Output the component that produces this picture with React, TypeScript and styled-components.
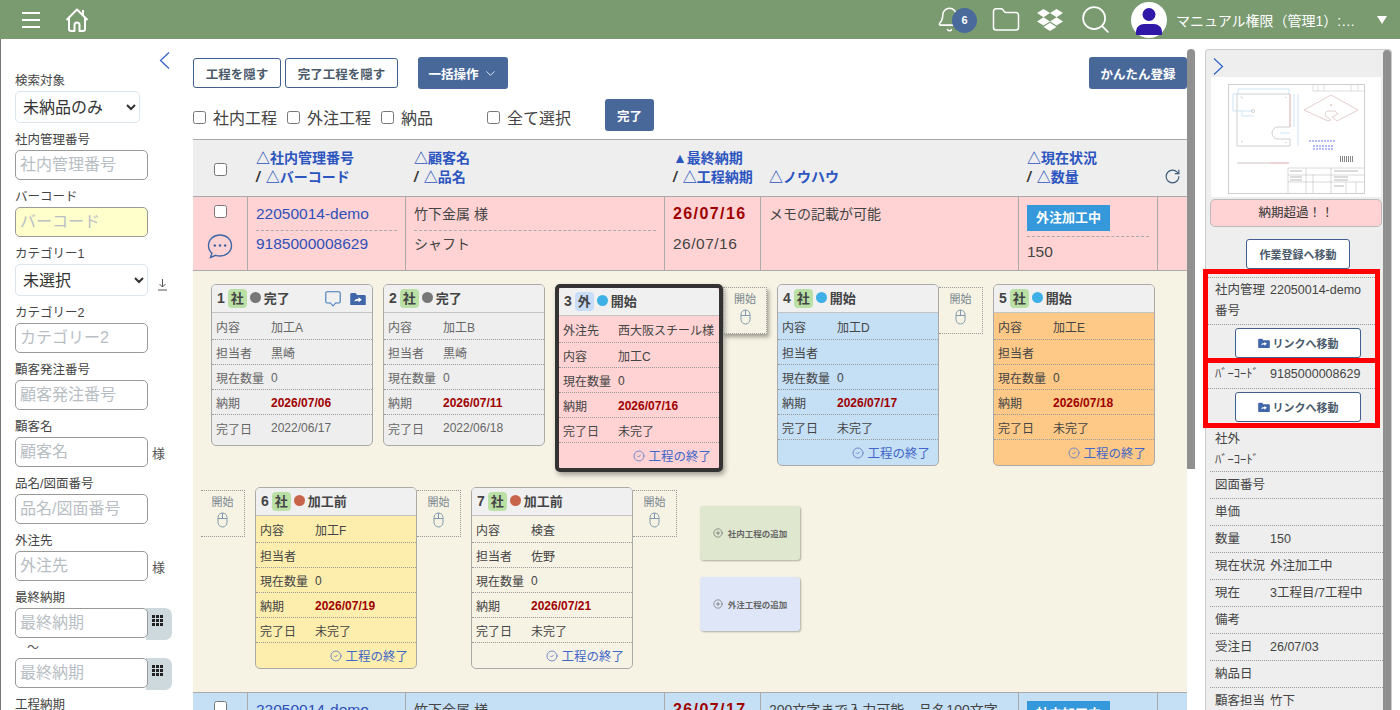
import React from 'react';
import styled, { createGlobalStyle } from 'styled-components';
import { Bell, ChevronDown, CircleCheck, CirclePlus, Folder, RotateCw, Search } from 'lucide-react';
import { FaDropbox } from 'react-icons/fa';

const GlobalStyle = createGlobalStyle`
  html, body { margin: 0; padding: 0; height: 100%; overflow: hidden; background: #fff; }
  body, input, select, button { font-family: "Liberation Sans", "Noto Sans CJK JP", sans-serif; }
  * { box-sizing: border-box; }
`;

type Step = {
  no: number;
  kind: '社' | '外';
  dot: string;
  status: string;
  bg: string;
  rows: [string, string][];
  due: string;
  done: string;
  finish?: boolean;
  selected?: boolean;
  startBefore?: boolean;
  startAfter?: boolean;
  tools?: boolean;
};

const steps: Step[] = [
  { no: 1, kind: '社', dot: '#777', status: '完了', bg: '#eee', rows: [['内容', '加工A'], ['担当者', '黒崎'], ['現在数量', '0']], due: '2026/07/06', done: '2022/06/17', tools: true },
  { no: 2, kind: '社', dot: '#777', status: '完了', bg: '#eee', rows: [['内容', '加工B'], ['担当者', '黒崎'], ['現在数量', '0']], due: '2026/07/11', done: '2022/06/18' },
  { no: 3, kind: '外', dot: '#3fb0e6', status: '開始', bg: '#ffd3d3', rows: [['外注先', '西大阪スチール様'], ['内容', '加工C'], ['現在数量', '0']], due: '2026/07/16', done: '未完了', finish: true, selected: true, startAfter: true },
  { no: 4, kind: '社', dot: '#3fb0e6', status: '開始', bg: '#c5dff5', rows: [['内容', '加工D'], ['担当者', ''], ['現在数量', '0']], due: '2026/07/17', done: '未完了', finish: true, startAfter: true },
  { no: 5, kind: '社', dot: '#3fb0e6', status: '開始', bg: '#fec986', rows: [['内容', '加工E'], ['担当者', ''], ['現在数量', '0']], due: '2026/07/18', done: '未完了', finish: true },
  { no: 6, kind: '社', dot: '#c8634c', status: '加工前', bg: '#fdeeae', rows: [['内容', '加工F'], ['担当者', ''], ['現在数量', '0']], due: '2026/07/19', done: '未完了', finish: true, startBefore: true, startAfter: true },
  { no: 7, kind: '社', dot: '#c8634c', status: '加工前', bg: '#f7f3e4', rows: [['内容', '検査'], ['担当者', '佐野'], ['現在数量', '0']], due: '2026/07/21', done: '未完了', finish: true, startAfter: true },
];

const fields = [
  { label: '社内管理番号' },
  { label: 'バーコード', yellow: true },
  { label: 'カテゴリー1', select: '未選択', sort: true },
  { label: 'カテゴリー2' },
  { label: '顧客発注番号' },
  { label: '顧客名', suffix: '様' },
  { label: '品名/図面番号' },
  { label: '外注先', suffix: '様' },
];

const panelRows: [string, string][] = [
  ['図面番号', ''],
  ['単価', ''],
  ['数量', '150'],
  ['現在状況', '外注加工中'],
  ['現在', '3工程目/7工程中'],
  ['備考', ''],
  ['受注日', '26/07/03'],
  ['納品日', ''],
  ['顧客担当', '竹下'],
];

function HomeIcon() {
  return (
    <svg width="24" height="26" viewBox="0 0 24 26" fill="none" stroke="#fff" strokeWidth="2" strokeLinejoin="round">
      <path d="M1.5 13 12 2.5 22.5 13" />
      <path d="M18 3v5" />
      <path d="M4 11v11a2 2 0 0 0 2 2h3.5v-6a2.5 2.5 0 0 1 5 0v6H18a2 2 0 0 0 2-2V11" />
    </svg>
  );
}

function AvatarIcon() {
  return (
    <svg width="36" height="36" viewBox="0 0 36 36">
      <circle cx="18" cy="18" r="18" fill="#fff" />
      <circle cx="18" cy="12.5" r="6.5" fill="#2f17a8" />
      <path d="M5 33v-3c0-5 4-8 8-8h10c4 0 8 3 8 8v3z" fill="#2f17a8" />
    </svg>
  );
}

function ChatIcon() {
  return (
    <svg width="26" height="26" viewBox="0 0 26 26" fill="none" stroke="#3f66a8" strokeWidth="1.4">
      <path d="M13 2c6.4 0 11.5 4.5 11.5 10.5S19.4 23 13 23c-1.6 0-3-.2-4.3-.7L3.5 24.500l1.400-4.300C2.800 18.300 1.500 15.600 1.500 12.500 1.500 6.500 6.600 2 13 2z" />
      <circle cx="7.8" cy="12.5" r="1.3" fill="#3f66a8" stroke="none" />
      <circle cx="13" cy="12.5" r="1.3" fill="#3f66a8" stroke="none" />
      <circle cx="18.2" cy="12.5" r="1.3" fill="#3f66a8" stroke="none" />
    </svg>
  );
}

function BubbleIcon() {
  return (
    <svg width="16" height="16" viewBox="0 0 16 16" fill="none" stroke="#3f7ab8" strokeWidth="1.1" strokeLinejoin="round">
      <path d="M2 .8h12a1.200 1.200 0 0 1 1.200 1.200v8.800a1.200 1.200 0 0 1-1.200 1.200h-3.500L8 15l-2.500-3H2A1.200 1.200 0 0 1 .8 10.800V2A1.200 1.200 0 0 1 2 .8z" />
    </svg>
  );
}

function MouseIcon() {
  return (
    <svg width="11" height="16" viewBox="0 0 11 16" fill="none" stroke="#7f9ab0" strokeWidth="1">
      <rect x="1" y="1" width="9" height="14" rx="4.5" />
      <path d="M1 6.5h9M5.5 1v5.5" />
    </svg>
  );
}

function CalendarGrid() {
  return (
    <svg width="12" height="12" viewBox="0 0 12 12" fill="#222">
      {[0, 4, 8].flatMap((y) => [0, 4, 8].map((x) => <rect key={`${x}-${y}`} x={x} y={y} width="3" height="3" />))}
    </svg>
  );
}

function FolderLinkIcon({ size = 16 }: { size?: number }) {
  return (
    <svg width={size} height={size * 0.85} viewBox="0 0 16 14" fill="#3f66a8">
      <path d="M0 2.500A1.500 1.500 0 0 1 1.500 1h4l1.500 2h7.500A1.500 1.500 0 0 1 16 4.500v8a1.500 1.500 0 0 1-1.500 1.500h-13A1.500 1.500 0 0 1 0 12.500z" />
      <path d="M4 10c.5-2 2-3 4.500-3V5.500L12 8 8.500 10.500V9C6.500 9 5 9.200 4 10z" fill="#fff" />
    </svg>
  );
}

function SlimChevron({ left }: { left?: boolean }) {
  return (
    <svg width="11" height="17" viewBox="0 0 11 17" fill="none" stroke="#2f62c8" strokeWidth="1.2">
      <path d={left ? 'M10 .5 1.500 8.500l8.500 8' : 'M1 .5l8.500 8-8.500 8'} />
    </svg>
  );
}

function SortArrowIcon() {
  return (
    <svg width="11" height="12" viewBox="0 0 11 12" fill="none" stroke="#555" strokeWidth="1">
      <path d="M5.500 0v8M2.500 5l3 3 3-3M1 11h9" />
    </svg>
  );
}

function DrawingThumb() {
  return (
    <svg width="137" height="110" viewBox="0 0 137 110" fill="none">
      <rect x="0.5" y="0.5" width="136" height="109" stroke="#cfcfcf" />
      <path d="M85 1v6h51M90 1v6M96 1v6M123 1v6M130 1v6" stroke="#c8c8c8" strokeWidth="0.6" />
      <path d="M9 10h53v33H50a6 6 0 0 0 0 12h12v7H9z" stroke="#c4c4c4" strokeWidth="0.8" />
      <path d="M62 10v33" stroke="#f0b8b8" strokeWidth="0.8" />
      <path d="M10 5h51M10 5v5M61 5v5M5 10v17M5 10h4M5 27h20M14 27v5h12M66 10v33M70 10v52M52 49h10" stroke="#bcd8f4" strokeWidth="0.7" />
      <circle cx="25" cy="27" r="1.6" stroke="#bbb" strokeWidth="0.6" />
      <path d="M13 12.500l1.500 2M13 57l1.500 1M57 13l1 1M57 58l1 1" stroke="#aaa" strokeWidth="0.7" />
      <path d="M76 26 103 11l27 15-21 11-5-4 6-3-3-3h-7a3 3 0 0 0-2 5l5 4-3 1z" stroke="#d9b9b9" strokeWidth="0.7" />
      <circle cx="103" cy="21" r="0.8" fill="#c99" />
      <path d="M81 57h27M85 62h20M85 65h20" stroke="#6a78f0" strokeWidth="1.2" strokeDasharray="2 1" />
      <path d="M112 75h14" stroke="#888" strokeWidth="6" strokeDasharray="1 1" />
      <path d="M9 79h33" stroke="#d0c4c4" strokeWidth="1.1" />
      <path d="M42 79h19" stroke="#e8b0b0" strokeWidth="1.1" />
      <path d="M60 84h76M60 84v25M78 84v25M85 90v19M60 91h76M60 98h76M103 84v25M118 98v11M128 98v11" stroke="#b0b0b0" strokeWidth="0.5" />
      <path d="M62 87h12M62 93h12M62 96h12M106 87h24M106 93h14M106 96h14M106 102h10" stroke="#999" strokeWidth="0.7" />
    </svg>
  );
}

function StepCard({ step }: { step: Step }) {
  const rows: [string, string, boolean][] = [
    ...step.rows.map(([k, v]) => [k, v, false] as [string, string, boolean]),
    ['納期', step.due, true],
    ['完了日', step.done, false],
  ];
  return (
    <Card $bg={step.bg} $selected={step.selected} $plain={step.bg === '#eee'}>
      <CardHead>
        <StepNo>{step.no}</StepNo>
        <KindBadge $kind={step.kind}>{step.kind}</KindBadge>
        <StatusDot $color={step.dot} />
        <StatusText>{step.status}</StatusText>
        {step.tools && (
          <CardTools>
            <BubbleIcon />
            <FolderLinkIcon />
          </CardTools>
        )}
      </CardHead>
      {rows.map(([k, v, isDue], i) => (
        <CardRow key={k} $first={i === 0} $last={i === rows.length - 1 && !step.finish}>
          <CardKey>{k}</CardKey>
          <CardValue $due={isDue}>{v}</CardValue>
        </CardRow>
      ))}
      {step.finish && (
        <FinishLink>
          <CircleCheck size={12} strokeWidth={1.8} />
          工程の終了
        </FinishLink>
      )}
    </Card>
  );
}

export default function App() {
  return (
    <Page>
      <GlobalStyle />
      <Header>
        <HeaderLeft>
          <Burger><span /><span /><span /></Burger>
          <HomeIcon />
        </HeaderLeft>
        <HeaderRight>
          <BellWrap>
            <Bell size={27} color="#fff" strokeWidth={1.4} />
            <BellBadge>6</BellBadge>
          </BellWrap>
          <Folder size={30} color="#fff" strokeWidth={1.2} />
          <FaDropbox size={26} color="#fff" />
          <Search size={33} color="#fff" strokeWidth={1.2} />
          <UserBox>
            <AvatarIcon />
            <UserName>マニュアル権限（管理1）:…</UserName>
            <Caret />
          </UserBox>
        </HeaderRight>
      </Header>

      <Body>
        <Sidebar>
          <SideCollapse><SlimChevron left /></SideCollapse>
          <FieldLabel>検索対象</FieldLabel>
          <FieldRow>
            <SelectBox defaultValue="未納品のみ" $width={125}>
              <option>未納品のみ</option>
            </SelectBox>
          </FieldRow>
          {fields.map((f) => (
            <React.Fragment key={f.label}>
              <FieldLabel>{f.label}</FieldLabel>
              <FieldRow>
                {f.select ? (
                  <SelectBox defaultValue={f.select} $width={133}>
                    <option>{f.select}</option>
                  </SelectBox>
                ) : (
                  <TextInput placeholder={f.label} $yellow={f.yellow} />
                )}
                {f.suffix && <Suffix>{f.suffix}</Suffix>}
                {f.sort && <SortMark><SortArrowIcon /></SortMark>}
              </FieldRow>
            </React.Fragment>
          ))}
          <FieldLabel>最終納期</FieldLabel>
          <DateRow>
            <TextInput placeholder="最終納期" />
            <DateAddon><CalendarGrid /></DateAddon>
          </DateRow>
          <Tilde>～</Tilde>
          <DateRow>
            <TextInput placeholder="最終納期" />
            <DateAddon><CalendarGrid /></DateAddon>
          </DateRow>
          <FieldLabel>工程納期</FieldLabel>
        </Sidebar>

        <Main>
          <Toolbar>
            <ToolGroup>
              <OutlineButton $width={88}>工程を隠す</OutlineButton>
              <OutlineButton $width={113}>完了工程を隠す</OutlineButton>
              <BulkButton>一括操作<ChevronDown size={15} strokeWidth={1.3} /></BulkButton>
            </ToolGroup>
            <FillButton>かんたん登録</FillButton>
          </Toolbar>
          <FilterRow>
            <Check><input type="checkbox" />社内工程</Check>
            <Check><input type="checkbox" />外注工程</Check>
            <Check><input type="checkbox" />納品</Check>
            <Check $gap={44}><input type="checkbox" />全て選択</Check>
            <DoneButton>完了</DoneButton>
          </FilterRow>

          <TableHead>
            <HeadCheck><input type="checkbox" /></HeadCheck>
            <HeadCell>
              <SortLink>△社内管理番号</SortLink>
              <span><Slash>/</Slash> <SortLink>△バーコード</SortLink></span>
            </HeadCell>
            <HeadCell>
              <SortLink>△顧客名</SortLink>
              <span><Slash>/</Slash> <SortLink>△品名</SortLink></span>
            </HeadCell>
            <HeadCell>
              <SortLink>▲最終納期</SortLink>
              <span><Slash>/</Slash> <SortLink>△工程納期</SortLink></span>
            </HeadCell>
            <HeadCell>
              <span>&nbsp;</span>
              <SortLink>△ノウハウ</SortLink>
            </HeadCell>
            <HeadCell>
              <SortLink>△現在状況</SortLink>
              <span><Slash>/</Slash> <SortLink>△数量</SortLink></span>
            </HeadCell>
            <HeadRefresh><RotateCw size={17} color="#3a5a78" strokeWidth={1.6} /></HeadRefresh>
          </TableHead>

          <OrderRow $bg="#ffd3d3">
            <CheckCell>
              <input type="checkbox" />
              <ChatIcon />
            </CheckCell>
            <OrderCell>
              <OrderLine $link $dash $latin>22050014-demo</OrderLine>
              <OrderLine $link $latin>9185000008629</OrderLine>
            </OrderCell>
            <OrderCell>
              <OrderLine $dash>竹下金属 様</OrderLine>
              <OrderLine>シャフト</OrderLine>
            </OrderCell>
            <OrderCell>
              <DueLine>26/07/16</DueLine>
              <OrderLine $latin $spaced>26/07/16</OrderLine>
            </OrderCell>
            <OrderCell>
              <MemoLine>メモの記載が可能</MemoLine>
            </OrderCell>
            <OrderCell>
              <StateWrap><StateTag>外注加工中</StateTag></StateWrap>
              <QtyLine $latin>150</QtyLine>
            </OrderCell>
            <OrderCell />
          </OrderRow>

          <FlowArea>
            {steps.map((step) => (
              <React.Fragment key={step.no}>
                {step.startBefore && <StartBox><span>開始</span><MouseIcon /></StartBox>}
                <StepCard step={step} />
                {step.startAfter && (
                  <StartBox $raised={step.selected}><span>開始</span><MouseIcon /></StartBox>
                )}
              </React.Fragment>
            ))}
            <AddColumn>
              <AddButton $bg="#dfe8cf"><CirclePlus size={10} strokeWidth={1.6} />社内工程の追加</AddButton>
              <AddButton $bg="#dfe6f7"><CirclePlus size={10} strokeWidth={1.6} />外注工程の追加</AddButton>
            </AddColumn>
          </FlowArea>

          <OrderRow $bg="#c5dff5">
            <CheckCell><input type="checkbox" /></CheckCell>
            <OrderCell><OrderLine $link $dash $latin>22050014-demo</OrderLine></OrderCell>
            <OrderCell><OrderLine $dash>竹下金属 様</OrderLine></OrderCell>
            <OrderCell><DueLine>26/07/17</DueLine></OrderCell>
            <OrderCell><MemoLine>200文字まで入力可能。品名100文字</MemoLine></OrderCell>
            <OrderCell><StateWrap><StateTag>社内加工中</StateTag></StateWrap></OrderCell>
            <OrderCell />
          </OrderRow>
        </Main>

        <MainScroll><ScrollThumb $height={420} /></MainScroll>

        <Panel>
          <PanelInner>
            <PanelToggle><SlimChevron /></PanelToggle>
            <ThumbBox><DrawingThumb /></ThumbBox>
            <OverdueBox>納期超過！！</OverdueBox>
            <WorkButton>作業登録へ移動</WorkButton>
            <MarkedBox>
              <PanelRow $top>
                <PanelKey>社内管理番号</PanelKey>
                <PanelValue>22050014-demo</PanelValue>
              </PanelRow>
              <LinkButton><FolderLinkIcon size={12} />リンクへ移動</LinkButton>
            </MarkedBox>
            <MarkedBox $second>
              <PanelRow>
                <PanelKey>ﾊﾞｰｺｰﾄﾞ</PanelKey>
                <PanelValue>9185000008629</PanelValue>
              </PanelRow>
              <LinkButton><FolderLinkIcon size={12} />リンクへ移動</LinkButton>
            </MarkedBox>
            <TightRow>
              <PanelKey>社外<br />ﾊﾞｰｺｰﾄﾞ</PanelKey>
            </TightRow>
            {panelRows.map(([k, v]) => (
              <PanelRow key={k}>
                <PanelKey>{k}</PanelKey>
                <PanelValue>{v}</PanelValue>
              </PanelRow>
            ))}
          </PanelInner>
          <ScrollThumb $height={661} />
        </Panel>
      </Body>
    </Page>
  );
}

const Page = styled.div`
  width: 1400px;
  height: 710px;
  display: flex;
  flex-direction: column;
  overflow: hidden;
  color: #333;
`;

const Header = styled.header`
  height: 39px;
  flex-shrink: 0;
  background: #7a9a70;
  display: flex;
  align-items: center;
  justify-content: space-between;
  padding: 0 0 0 22px;
`;

const HeaderLeft = styled.div`
  display: flex;
  align-items: center;
  gap: 25px;
`;

const Burger = styled.div`
  width: 18px;
  display: flex;
  flex-direction: column;
  gap: 5px;

  & > span {
    height: 2px;
    background: #fff;
  }
`;

const HeaderRight = styled.div`
  display: flex;
  align-items: center;
  gap: 16px;
`;

const BellWrap = styled.div`
  position: relative;
  width: 39px;
  height: 30px;
  display: flex;
  align-items: center;
`;

const BellBadge = styled.span`
  position: absolute;
  left: 16px;
  top: 3px;
  width: 25px;
  height: 25px;
  border-radius: 50%;
  background: #4a6a9c;
  color: #fff;
  font-size: 11px;
  font-weight: 700;
  display: flex;
  align-items: center;
  justify-content: center;
`;

const UserBox = styled.div`
  display: flex;
  align-items: center;
  gap: 9px;
  padding-right: 13px;
  margin-left: 3px;
`;

const UserName = styled.span`
  width: 192px;
  color: #fff;
  font-size: 14px;
  white-space: nowrap;
  overflow: hidden;
`;

const Caret = styled.span`
  width: 0;
  height: 0;
  border-left: 5.5px solid transparent;
  border-right: 5.5px solid transparent;
  border-top: 8px solid #fff;
`;

const Body = styled.div`
  flex: 1;
  min-height: 0;
  display: flex;
  border-left: 1px solid #777;
`;

const Sidebar = styled.aside`
  position: relative;
  width: 192px;
  flex-shrink: 0;
  padding: 30px 0 0 14px;
  overflow: hidden;
`;

const SideCollapse = styled.div`
  position: absolute;
  top: 13px;
  left: 158px;
`;

const FieldLabel = styled.div`
  height: 22px;
  padding-top: 3px;
  font-size: 12.5px;
  line-height: 18px;
  color: #444;
`;

const FieldRow = styled.div`
  display: flex;
  align-items: center;
  margin-bottom: 5px;
`;

const TextInput = styled.input<{ $yellow?: boolean }>`
  position: relative;
  width: 133px;
  height: 30px;
  padding: 0 4px;
  font-size: 16px;
  border: 1px solid #999;
  border-radius: 5px;
  background: ${(p) => (p.$yellow ? '#ffffcc' : '#fff')};

  &::placeholder {
    color: #b8bec4;
  }
`;

const SelectBox = styled.select<{ $width: number }>`
  width: ${(p) => p.$width}px;
  height: 32px;
  padding: 0 3px;
  font-size: 16px;
  color: #333;
  background: #fff;
  border: 1px solid #dce4ec;
  border-radius: 5px;
`;

const Suffix = styled.span`
  margin-left: 4px;
  font-size: 13px;
  color: #555;
`;

const SortMark = styled.span`
  display: flex;
  margin: 10px 0 0 9px;
`;

const DateRow = styled.div`
  display: flex;
  align-items: flex-start;
  margin-bottom: 3px;
`;

const DateAddon = styled.div`
  width: 26px;
  height: 32px;
  margin-left: -2px;
  padding: 5px 0 0 6px;
  background: #cdd9dc;
  border-radius: 0 7px 7px 0;
`;

const Tilde = styled.div`
  height: 15px;
  padding-left: 12px;
  font-size: 12px;
  line-height: 10px;
  color: #555;
`;

const Main = styled.main`
  width: 994px;
  flex-shrink: 0;
  padding-top: 18px;
`;

const Toolbar = styled.div`
  display: flex;
  justify-content: space-between;
  align-items: flex-start;
`;

const ToolGroup = styled.div`
  display: flex;
  align-items: center;
  gap: 4px;
`;

const OutlineButton = styled.button<{ $width?: number }>`
  width: ${(p) => (p.$width ? `${p.$width}px` : 'auto')};
  height: 30px;
  padding: 0;
  background: #fff;
  border: 1px solid #3f5f8f;
  border-radius: 3px;
  font-size: 12.5px;
  font-weight: 700;
  color: #4a5a6a;
`;

const FillButton = styled.button`
  width: 98px;
  height: 32px;
  padding: 0;
  border: 0;
  border-radius: 3px;
  background: #48689a;
  color: #fff;
  font-size: 12.5px;
  font-weight: 700;
`;

const BulkButton = styled(FillButton)`
  width: 90px;
  margin-left: 16px;
  display: flex;
  align-items: center;
  justify-content: center;
  gap: 4px;
`;

const FilterRow = styled.div`
  height: 50px;
  padding-top: 10px;
  display: flex;
  align-items: flex-start;
`;

const Check = styled.label<{ $gap?: number }>`
  height: 32px;
  display: flex;
  align-items: center;
  margin-top: 2px;
  margin-left: ${(p) => p.$gap ?? 0}px;
  margin-right: 10px;
  font-size: 16px;
  color: #444;

  & > input {
    width: 13px;
    height: 13px;
    margin: 0 7px 0 0;
  }
`;

const DoneButton = styled(FillButton)`
  margin-left: 24px;
  width: 49px;
`;

const sevenCols = `54px 158px 259px 96px 258px 139px 30px`;

const TableHead = styled.div`
  height: 58px;
  display: grid;
  grid-template-columns: ${sevenCols};
  background: #eee;
  border-top: 1px solid #aaa;
  border-bottom: 1px solid #aaa;
`;

const HeadCheck = styled.div`
  display: flex;
  align-items: center;
  justify-content: center;
  padding-top: 3px;

  & > input {
    width: 13px;
    height: 13px;
    margin: 0;
  }
`;

const HeadCell = styled.div`
  padding: 9px 0 0 9px;
  display: flex;
  flex-direction: column;
  font-size: 14px;
  line-height: 19px;
`;

const SortLink = styled.span`
  color: #2c55c0;
  font-weight: 700;
`;

const Slash = styled.span`
  margin-right: 2px;
  color: #333;
  font-style: italic;
  font-weight: 700;
`;

const HeadRefresh = styled.div`
  display: flex;
  align-items: flex-end;
  justify-content: center;
  padding-bottom: 11px;
`;

const OrderRow = styled.div<{ $bg: string }>`
  height: 74px;
  display: grid;
  grid-template-columns: ${sevenCols};
  background: ${(p) => p.$bg};
  border-bottom: 1px solid #aaa;
`;

const CheckCell = styled.div`
  display: flex;
  flex-direction: column;
  align-items: center;
  gap: 15px;
  padding-top: 8px;

  & > input {
    width: 13px;
    height: 13px;
    margin: 0;
  }
`;

const OrderCell = styled.div`
  border-left: 1px solid #aaa;
  padding: 0 8px;
`;

const OrderLine = styled.div<{ $link?: boolean; $dash?: boolean; $latin?: boolean; $spaced?: boolean }>`
  height: ${(p) => (p.$dash ? 34 : 30)}px;
  padding-top: ${(p) => (p.$dash ? 7 : 3)}px;
  font-size: ${(p) => (p.$latin ? 15.5 : 14)}px;
  letter-spacing: ${(p) => (p.$spaced ? 0.5 : 0)}px;
  line-height: 20px;
  color: ${(p) => (p.$link ? '#2f50b8' : '#444')};
  border-bottom: ${(p) => (p.$dash ? '1px dashed #aaa' : '0')};
  white-space: nowrap;
`;

const MemoLine = styled(OrderLine)`
  padding-top: 7px;
`;

const QtyLine = styled(OrderLine)`
  padding-top: 5px;
`;

const DueLine = styled.div`
  height: 34px;
  padding-top: 7px;
  font-size: 16px;
  font-weight: 700;
  letter-spacing: 1.4px;
  line-height: 20px;
  color: #a00000;
`;

const StateWrap = styled.div`
  height: 40px;
  padding-top: 8px;
  border-bottom: 1px dashed #aaa;
`;

const StateTag = styled.span`
  display: inline-block;
  height: 26px;
  padding: 0 9px;
  background: #3498db;
  color: #fff;
  font-size: 13px;
  font-weight: 700;
  line-height: 26px;
`;

const FlowArea = styled.div`
  height: 422px;
  padding: 13px 8px 0;
  background: #f7f3e4;
  border-bottom: 1px solid #aaa;
  display: flex;
  flex-wrap: wrap;
  align-items: flex-start;
  align-content: flex-start;
  row-gap: 15px;
`;

const Card = styled.div<{ $bg: string; $selected?: boolean; $plain?: boolean }>`
  width: ${(p) => (p.$selected ? 168 : 162)}px;
  margin-left: 10px;
  flex-shrink: 0;
  background: ${(p) => p.$bg};
  border: ${(p) => (p.$selected ? '4px solid #333' : '1px solid #aaa')};
  border-radius: 5px;
  box-shadow: ${(p) => (p.$selected ? '2px 3px 5px rgba(0, 0, 0, 0.35)' : 'none')};
  padding-bottom: ${(p) => (p.$plain ? 5 : 0)}px;
  color: ${(p) => (p.$plain ? '#666' : '#444')};
`;

const CardHead = styled.div`
  height: 28px;
  padding-left: 5px;
  display: flex;
  align-items: center;
  background: #f0f0f0;
  border-bottom: 1px solid #c4c4c4;
  border-radius: 4px 4px 0 0;
`;

const StepNo = styled.span`
  padding-bottom: 2px;
  font-size: 14px;
  font-weight: 700;
  color: #444;
`;

const KindBadge = styled.span<{ $kind: string }>`
  width: 19px;
  height: 19px;
  margin: 0 3px;
  border-radius: 4px;
  background: ${(p) => (p.$kind === '社' ? '#bbe0a5' : '#c9dcfa')};
  font-size: 13px;
  font-weight: 700;
  line-height: 19px;
  text-align: center;
  color: #444;
`;

const StatusDot = styled.span<{ $color: string }>`
  width: 11px;
  height: 11px;
  margin: 0 3px 2px 0;
  border-radius: 50%;
  background: ${(p) => p.$color};
`;

const StatusText = styled.span`
  padding-bottom: 2px;
  font-size: 13px;
  font-weight: 700;
  color: #444;
`;

const CardTools = styled.span`
  margin-left: auto;
  padding-right: 6px;
  display: flex;
  align-items: center;
  gap: 9px;
`;

const CardRow = styled.div<{ $first?: boolean; $last?: boolean }>`
  height: ${(p) => (p.$first ? 27 : 25)}px;
  padding: 1px 0 0 4px;
  display: flex;
  align-items: center;
  border-bottom: ${(p) => (p.$last ? '0' : '1px dotted #999')};
  font-size: 12px;
`;

const CardKey = styled.span`
  width: 55px;
  flex-shrink: 0;
  white-space: nowrap;
`;

const CardValue = styled.span<{ $due?: boolean }>`
  white-space: nowrap;
  font-weight: ${(p) => (p.$due ? 700 : 400)};
  color: ${(p) => (p.$due ? '#a00000' : 'inherit')};
`;

const FinishLink = styled.div`
  height: 25px;
  padding-right: 8px;
  display: flex;
  align-items: center;
  justify-content: flex-end;
  gap: 3px;
  font-size: 12.5px;
  color: #3f66c8;

  & > svg {
    color: #6680c8;
  }
`;

const StartBox = styled.div<{ $raised?: boolean }>`
  width: 44px;
  height: 47px;
  margin-top: 3px;
  flex-shrink: 0;
  display: flex;
  flex-direction: column;
  align-items: center;
  gap: 3px;
  padding-top: 4px;
  border: 1px dotted #999;
  border-left-style: ${(p) => (p.$raised ? 'dotted' : 'none')};
  box-shadow: ${(p) => (p.$raised ? '2px 3px 4px rgba(0, 0, 0, 0.35)' : 'none')};
  font-size: 11px;
  line-height: 14px;
  color: #78868f;
`;

const AddColumn = styled.div`
  margin: 19px 0 0 23px;
  display: flex;
  flex-direction: column;
  gap: 17px;
`;

const AddButton = styled.div<{ $bg: string }>`
  width: 100px;
  height: 54px;
  display: flex;
  align-items: center;
  justify-content: center;
  gap: 5px;
  background: ${(p) => p.$bg};
  border-radius: 3px;
  box-shadow: 1px 1px 2px rgba(0, 0, 0, 0.3);
  font-size: 8.5px;
  font-weight: 700;
  color: #666;
`;

const MainScroll = styled.div`
  width: 8px;
  flex-shrink: 0;
  padding-top: 10px;
`;

const ScrollThumb = styled.div<{ $height: number }>`
  width: 8px;
  height: ${(p) => p.$height}px;
  flex-shrink: 0;
  background: #909090;
  border-radius: 4px 4px 0 0;
`;

const Panel = styled.aside`
  width: 187px;
  margin: 10px 0 0 10px;
  display: flex;
  align-items: flex-start;
  background: #eee;
  border: 1px solid #ccc;
  border-bottom: 0;
  border-radius: 4px 4px 0 0;
`;

const PanelInner = styled.div`
  width: 177px;
  flex-shrink: 0;
  padding: 0 0 0 4px;
`;

const PanelToggle = styled.div`
  height: 27px;
  padding: 8px 0 0 3px;
`;

const ThumbBox = styled.div`
  width: 170px;
  height: 120px;
  margin-left: 1px;
  padding-bottom: 3px;
  background: #fff;
  display: flex;
  align-items: flex-end;
  justify-content: center;
`;

const OverdueBox = styled.div`
  width: 172px;
  height: 28px;
  margin-top: 2px;
  background: #ffd3d3;
  border: 1px solid #bbb;
  border-radius: 5px;
  font-size: 12.5px;
  line-height: 26px;
  text-align: center;
`;

const WorkButton = styled(OutlineButton)`
  display: block;
  width: 104px;
  margin: 12px 0 0 36px;
  font-size: 11px;
`;

const PanelRow = styled.div<{ $top?: boolean }>`
  padding: 3px 0 2px 5px;
  display: flex;
  align-items: flex-start;
  border-top: ${(p) => (p.$top ? '1px dotted #999' : '0')};
  border-bottom: 1px dotted #999;
  font-size: 12.5px;
  line-height: 21px;
  color: #444;
  min-height: 27px;
`;

const TightRow = styled(PanelRow)`
  padding: 1px 0 0 5px;
`;

const MarkedBox = styled.div<{ $second?: boolean }>`
  width: 177px;
  margin-left: -7px;
  padding-top: ${(p) => (p.$second ? 0 : 3)}px;
  padding-bottom: ${(p) => (p.$second ? 1 : 0)}px;
  border: 5px solid #f00;
  border-top-width: ${(p) => (p.$second ? 0 : 5)}px;

  & > ${PanelRow} {
    min-height: 0;
    padding: ${(p) => (p.$second ? '1px 0 3px 7px' : '2px 0 2px 7px')};
  }
`;

const PanelKey = styled.span`
  width: 55px;
  flex-shrink: 0;
`;

const PanelValue = styled.span`
  white-space: nowrap;
`;

const LinkButton = styled(OutlineButton)`
  display: flex;
  align-items: center;
  justify-content: center;
  gap: 3px;
  width: 126px;
  margin: 3px 0 0 27px;
  font-size: 11px;
`;
